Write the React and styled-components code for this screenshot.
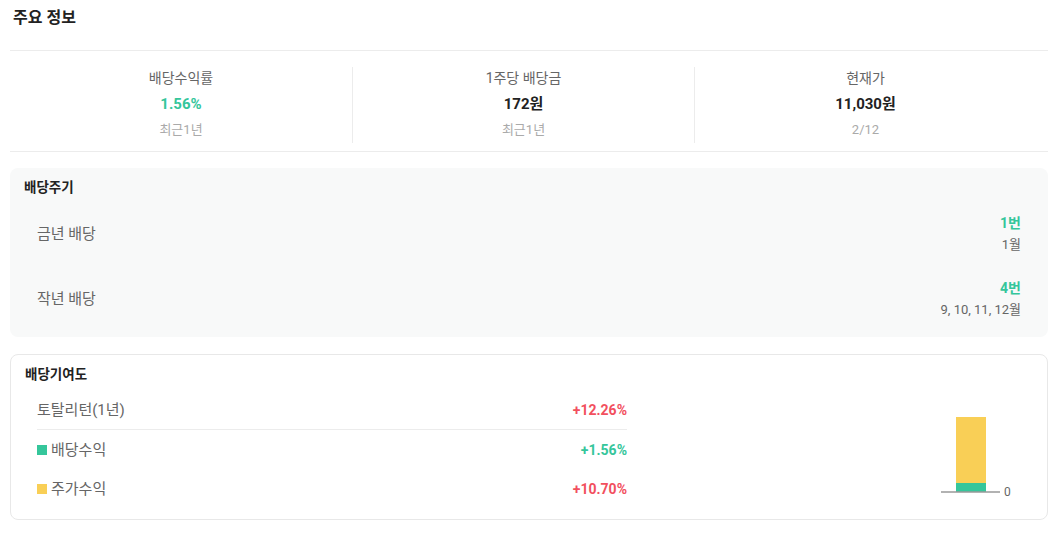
import React from "react";
import styled, { createGlobalStyle } from "styled-components";

const GREEN = "#35c69b";
const RED = "#f2505e";
const YELLOW = "#f9cf56";

const Global = createGlobalStyle`
  html, body { margin: 0; padding: 0; background: #fff; }
  body {
    font-family: Roboto, "Noto Sans CJK KR", "Noto Sans", sans-serif;
    color: #222;
    -webkit-font-smoothing: antialiased;
  }
`;

const Page = styled.div`
  width: 1038px;
  margin-left: 10px;
`;

const Title = styled.h2`
  margin: 0;
  padding: 7px 0 0 3px;
  height: 51px;
  box-sizing: border-box;
  font-size: 16px;
  line-height: 22px;
  font-weight: 700;
  color: #222;
  border-bottom: 1px solid #ececec;
`;

const Stats = styled.div`
  display: grid;
  grid-template-columns: repeat(3, 342px);
  padding: 16px 0 8px;
  border-bottom: 1px solid #ececec;
`;

const Stat = styled.div`
  display: flex;
  flex-direction: column;
  align-items: center;
  gap: 4px;
  padding-bottom: 2px;
  border-left: ${(p) => (p.$first ? "none" : "1px solid #ececec")};
`;

const StatLabel = styled.div`
  font-size: 14px;
  line-height: 22px;
  color: #666;
`;

const StatValue = styled.div`
  font-size: 15px;
  line-height: 22px;
  font-weight: 700;
  color: ${(p) => p.$color || "#222"};
`;

const StatSub = styled.div`
  font-size: 13px;
  line-height: 22px;
  color: #aaa;
`;

const CycleBox = styled.section`
  margin-top: 16px;
  background: #f8f9f9;
  border-radius: 8px;
  padding: 10px 14px 6px;
`;

const BoxTitle = styled.h3`
  margin: 0 0 ${(p) => p.$gap || 5}px;
  font-size: 13.5px;
  line-height: 18px;
  font-weight: 700;
  color: #222;
`;

const CycleRow = styled.div`
  display: flex;
  justify-content: space-between;
  align-items: center;
  padding: 12px 13px 11px;
`;

const RowLabel = styled.div`
  font-size: 15px;
  line-height: 20px;
  color: #666;
  display: flex;
  align-items: center;
  gap: 4px;
`;

const CycleRight = styled.div`
  display: flex;
  flex-direction: column;
  align-items: flex-end;
`;

const Count = styled.div`
  font-size: 14px;
  line-height: 21px;
  font-weight: 700;
  color: ${GREEN};
`;

const Months = styled.div`
  font-size: 13px;
  line-height: 21px;
  color: #666;
`;

const ContribBox = styled.section`
  margin-top: 17px;
  border: 1px solid #e8e8e8;
  border-radius: 8px;
  padding: 10px 14px 11px;
`;

const ContribBody = styled.div`
  display: flex;
  align-items: flex-end;
`;

const List = styled.div`
  width: 590px;
  margin-left: 12px;
`;

const ListRow = styled.div`
  display: flex;
  justify-content: space-between;
  align-items: center;
  height: ${(p) => (p.$divider ? 38 : 39)}px;
  border-bottom: ${(p) => (p.$divider ? "1px solid #ececec" : "none")};
`;

const Swatch = styled.span`
  width: 10px;
  height: 10px;
  background: ${(p) => p.$color};
  display: inline-block;
`;

const Pct = styled.div`
  font-size: 14px;
  font-weight: 700;
  color: ${(p) => p.$color};
`;

const Chart = styled.svg`
  display: block;
  margin-left: auto;
  margin-right: 16px;
  margin-bottom: 10px;
`;

export default function App() {
  return (
    <Page>
      <Global />
      <Title>주요 정보</Title>
      <Stats>
        <Stat $first>
          <StatLabel>배당수익률</StatLabel>
          <StatValue $color={GREEN}>1.56%</StatValue>
          <StatSub>최근1년</StatSub>
        </Stat>
        <Stat>
          <StatLabel>1주당 배당금</StatLabel>
          <StatValue>172원</StatValue>
          <StatSub>최근1년</StatSub>
        </Stat>
        <Stat>
          <StatLabel>현재가</StatLabel>
          <StatValue>11,030원</StatValue>
          <StatSub>2/12</StatSub>
        </Stat>
      </Stats>

      <CycleBox>
        <BoxTitle>배당주기</BoxTitle>
        <CycleRow>
          <RowLabel>금년 배당</RowLabel>
          <CycleRight>
            <Count>1번</Count>
            <Months>1월</Months>
          </CycleRight>
        </CycleRow>
        <CycleRow>
          <RowLabel>작년 배당</RowLabel>
          <CycleRight>
            <Count>4번</Count>
            <Months>9, 10, 11, 12월</Months>
          </CycleRight>
        </CycleRow>
      </CycleBox>

      <ContribBox>
        <BoxTitle $gap={8}>배당기여도</BoxTitle>
        <ContribBody>
          <List>
            <ListRow $divider>
              <RowLabel>토탈리턴(1년)</RowLabel>
              <Pct $color={RED}>+12.26%</Pct>
            </ListRow>
            <ListRow>
              <RowLabel>
                <Swatch $color={GREEN} />
                배당수익
              </RowLabel>
              <Pct $color={GREEN}>+1.56%</Pct>
            </ListRow>
            <ListRow>
              <RowLabel>
                <Swatch $color={YELLOW} />
                주가수익
              </RowLabel>
              <Pct $color={RED}>+10.70%</Pct>
            </ListRow>
          </List>
          <Chart width="76" height="84" viewBox="0 0 76 84">
            <rect x="15" y="3" width="30" height="66" fill={YELLOW} />
            <rect x="15" y="69" width="30" height="9" fill={GREEN} />
            <line x1="0" y1="78" x2="59" y2="78" stroke="#999" strokeWidth="1.5" />
            <text x="63" y="82" fontSize="12" fill="#666" fontFamily="Roboto, sans-serif">0</text>
          </Chart>
        </ContribBody>
      </ContribBox>
    </Page>
  );
}
